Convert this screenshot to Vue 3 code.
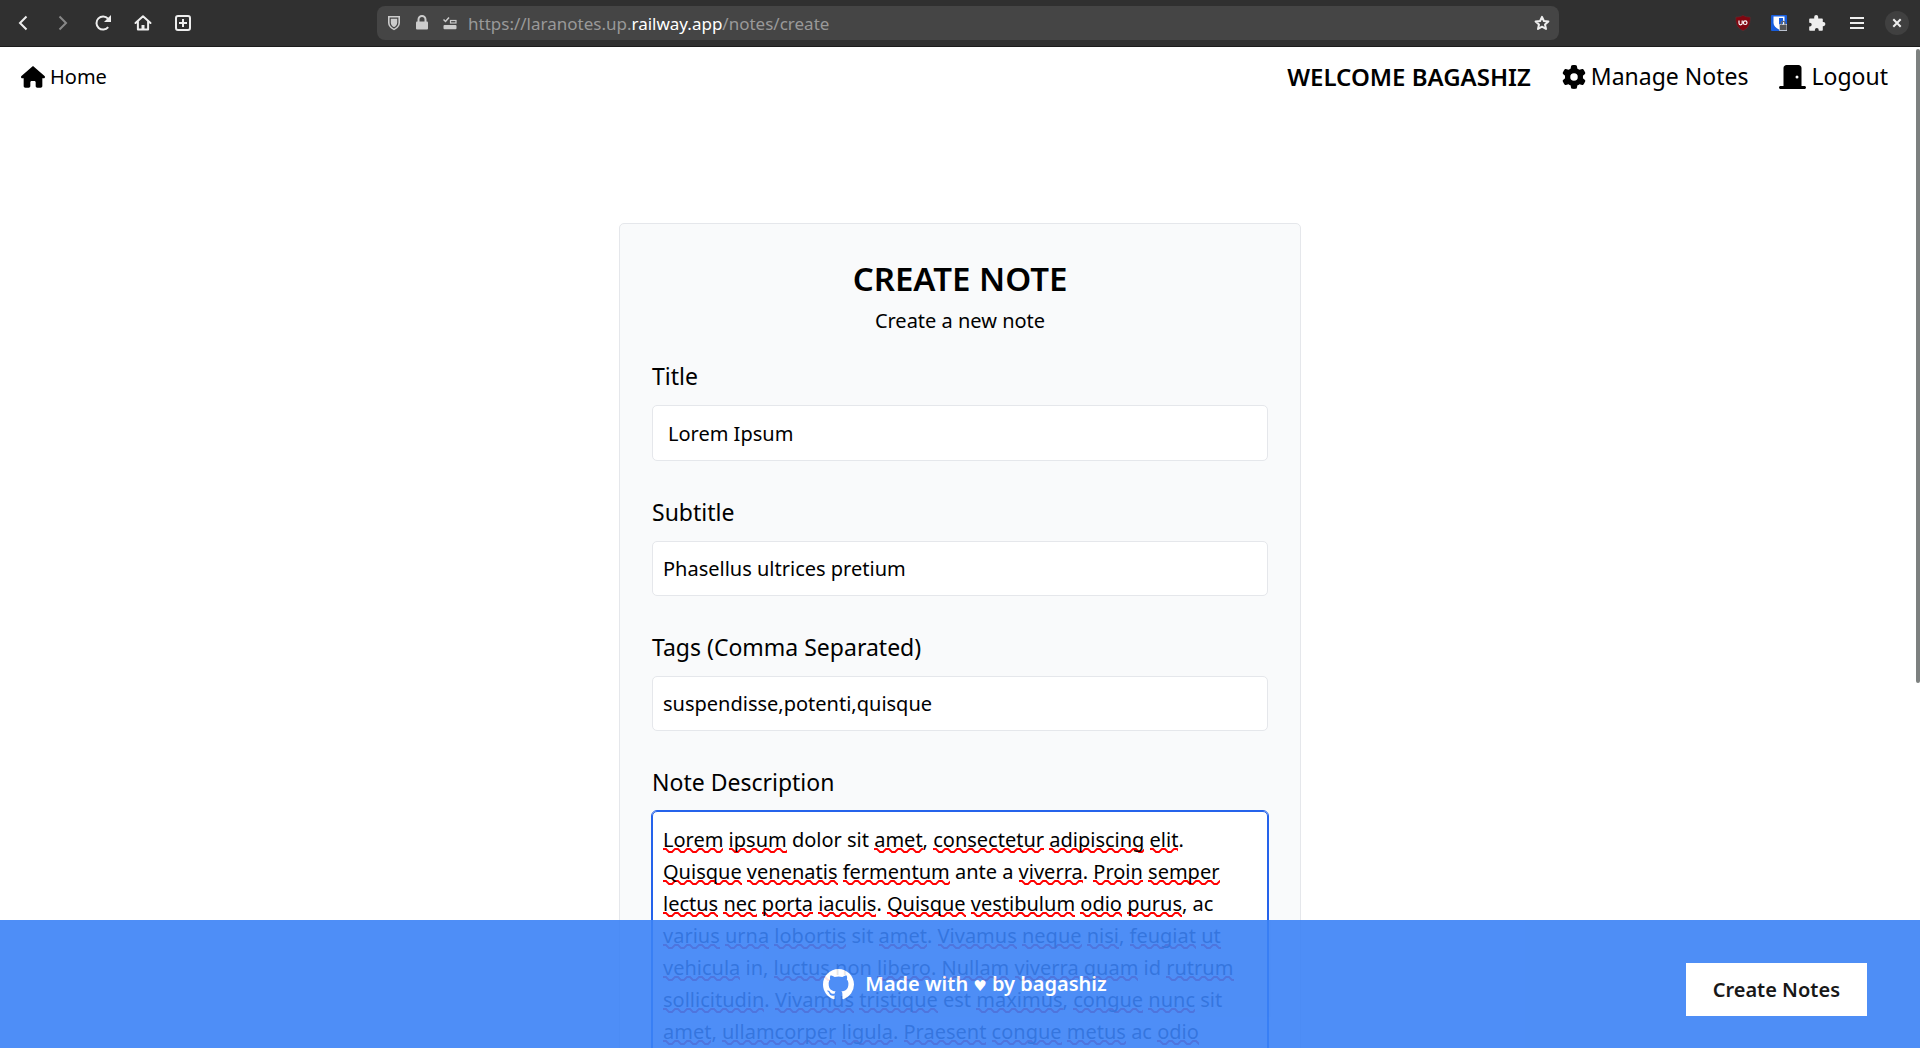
<script setup>
import { ref, computed } from 'vue'

const title = ref('Lorem Ipsum')
const subtitle = ref('Phasellus ultrices pretium')
const tags = ref('suspendisse,potenti,quisque')
const description = ref(
  [
    'Lorem ipsum dolor sit amet, consectetur adipiscing elit.',
    'Quisque venenatis fermentum ante a viverra. Proin semper',
    'lectus nec porta iaculis. Quisque vestibulum odio purus, ac',
    'varius urna lobortis sit amet. Vivamus neque nisi, feugiat ut',
    'vehicula in, luctus non libero. Nullam viverra quam id rutrum',
    'sollicitudin. Vivamus tristique est maximus, congue nunc sit',
    'amet, ullamcorper ligula. Praesent congue metus ac odio',
  ].join('\n'),
)

// words the spell checker accepts
const known = new Set(['dolor', 'sit', 'ante', 'a', 'ac', 'in', 'non', 'id', 'est'])

const tokens = computed(() =>
  (description.value.match(/[A-Za-z]+|[^A-Za-z]+/g) || []).map((text) => ({
    text,
    misspelt: /[A-Za-z]/.test(text) && !known.has(text),
  })),
)
</script>

<template>
  <div class="window">
    <header class="toolbar">
      <div class="tools tools-left">
        <button class="tool" aria-label="Back">
          <svg width="16" height="16" viewBox="0 0 16 16"><path d="M11.5 1.5 5 8l6.500 6.500" class="line" /></svg>
        </button>
        <button class="tool dim" aria-label="Forward">
          <svg width="16" height="16" viewBox="0 0 16 16"><path d="M4.5 1.500 11 8l-6.500 6.500" class="line" /></svg>
        </button>
        <button class="tool" aria-label="Reload">
          <svg width="18" height="18" viewBox="0 0 18 18"><path d="M14.2 13.2A6.6 6.6 0 1 1 14 4.6" class="line" /><path d="M17 1v7h-7z" fill="currentColor" /></svg>
        </button>
        <button class="tool" aria-label="Home page">
          <svg width="18" height="18" viewBox="0 0 18 18"><path d="M1.5 9 9 2.2 16.500 9M3.900 7.500V15.500H14.100V7.500" class="line" stroke-linejoin="round" stroke-linecap="round" /><path d="M7.500 15.500v-4.500h3v4.500z" fill="currentColor" /></svg>
        </button>
        <button class="tool" aria-label="New tab">
          <svg width="18" height="18" viewBox="0 0 18 18"><rect x="2" y="2" width="14" height="14" rx="2" class="line" /><path d="M9 5v8M5 9h8" class="line" /></svg>
        </button>
      </div>

      <div class="address">
        <div class="site-icons">
          <svg width="14" height="16" viewBox="0 0 14 16"><path d="M1 1h12v6.500c0 3.500-2.500 6-6 7.700C3.500 13.500 1 11 1 7.500z" fill="currentColor" /><path d="M3.200 3.200h7.600v4.500c0 2.300-1.500 4-3.800 5.200-2.300-1.200-3.800-2.900-3.800-5.200z" fill="none" stroke="#454545" stroke-width="1.200" /></svg>
          <svg width="14" height="16" viewBox="0 0 14 16"><path d="M3.500 7V4.500a3.500 3.500 0 0 1 7 0V7" class="line" /><rect x="1" y="6.500" width="12" height="8" rx="1" fill="currentColor" /></svg>
          <svg width="14" height="16" viewBox="0 0 14 16"><path d="M.500 4.500 2.500 6.500 6 2.500" fill="none" stroke="currentColor" stroke-width="1.500" /><rect x="7.500" y="5.500" width="5.500" height="2.500" fill="none" stroke="currentColor" stroke-width="1.200" /><rect x=".500" y="10" width="13" height="4.200" rx="1" fill="currentColor" /></svg>
        </div>
        <div class="url">https://laranotes.up.<span class="domain">railway.app</span>/notes/create</div>
        <button class="bookmark" aria-label="Bookmark this page">
          <svg width="16" height="16" viewBox="0 0 16 16"><path d="M8 1.800 9.900 6l4.500.500-3.400 3 1 4.500L8 11.700 4 14l1-4.500-3.400-3L6.100 6z" class="line" stroke-linejoin="round" /></svg>
        </button>
      </div>

      <div class="tools tools-right">
        <button class="tool narrow" aria-label="uBlock Origin">
          <svg width="16" height="16" viewBox="0 0 16 16"><path d="M8 .300c2 1.400 4.500 1.700 7.200 1.800C15.500 8.500 14 13 8 15.800 2 13 .500 8.500.800 2.100 3.500 2 6 1.700 8 .300z" fill="#800610" stroke="#5a3034" stroke-width=".600" /><path d="M4 5.500v2.800q0 1.500 1.600 1.500t1.600-1.500V5.500" fill="none" stroke="#fff" stroke-width="1.200" /><circle cx="10.200" cy="7.700" r="1.800" fill="none" stroke="#fff" stroke-width="1.200" /></svg>
        </button>
        <button class="tool narrow" aria-label="Bitwarden">
          <svg width="16" height="16" viewBox="0 0 16 16"><rect width="16" height="16" rx="1" fill="#175ddc" /><path d="M2.500 1.500h11v6.500c0 3-2.500 5-5.500 6.500-3-1.500-5.500-3.500-5.500-6.500z" fill="#fff" /><path d="M8 3h4v5c0 2-1.500 3.500-4 5z" fill="#175ddc" /><path d="M8.500 9.500h7.500v6H8.500z" fill="#555" stroke="#ddd" stroke-width=".800" /><path d="M10.300 9.500V8.300a1.900 1.900 0 0 1 3.800 0v1.200" fill="none" stroke="#666" stroke-width="1.300" /></svg>
        </button>
        <button class="tool" aria-label="Extensions">
          <svg width="18" height="18" viewBox="0 0 18 18"><path d="M2 4.500h4.200V3a2 2 0 0 1 4 0v1.500H14a.8.8 0 0 1 .8.8V8h.5a2 2 0 0 1 0 4.200h-.5V16a.8.8 0 0 1-.8.8h-3.300v-.8a1.900 1.900 0 0 0-3.800 0v.8H2a.8.8 0 0 1-.8-.8v-3.500h.6a1.900 1.900 0 0 0 0-3.800h-.6V5.300a.8.8 0 0 1 .8-.8z" fill="currentColor" /></svg>
        </button>
        <button class="tool" aria-label="Application menu">
          <svg width="14" height="14" viewBox="0 0 14 14"><path d="M0 2h14M0 7h14M0 12h14" class="line" /></svg>
        </button>
        <button class="tool" aria-label="Close window">
          <span class="close"><svg width="10" height="10" viewBox="0 0 10 10"><path d="M1.300 1.300l7.400 7.400M8.700 1.300 1.300 8.700" class="line" /></svg></span>
        </button>
      </div>
    </header>

    <div class="page">
      <nav class="nav">
        <a class="home" href="#home">
          <svg width="24" height="22" viewBox="0 0 576 512"><path fill="currentColor" d="M575.8 255.5c0 18-15 32.1-32 32.1h-32l.7 160.2c0 2.7-.2 5.4-.5 8.1V472c0 22.1-17.9 40-40 40H456c-1.1 0-2.200 0-3.300-.1c-1.400.1-2.800.1-4.200.1H416 392c-22.1 0-40-17.9-40-40V448 384c0-17.7-14.3-32-32-32H256c-17.7 0-32 14.3-32 32v64 24c0 22.1-17.9 40-40 40H160 128.1c-1.500 0-3-.1-4.500-.2c-1.200.1-2.400.2-3.600.2H104c-22.1 0-40-17.9-40-40V360c0-.9 0-1.900.1-2.800V287.600H32c-18 0-32-14-32-32.1c0-9 3-17 10-24L266.400 8c7-7 15-8 22-8s15 2 21 7L564.800 231.500c8 7 12 15 11 24z" /></svg>
          Home
        </a>
        <ul class="links">
          <li class="welcome">WELCOME BAGASHIZ</li>
          <li>
            <a href="#manage">
              <svg width="24" height="24" viewBox="0 0 512 512"><path fill="currentColor" d="M495.9 166.6c3.2 8.7 .5 18.4-6.4 24.6l-43.3 39.4c1.1 8.3 1.7 16.8 1.7 25.4s-.6 17.1-1.7 25.4l43.3 39.4c6.9 6.2 9.6 15.9 6.4 24.6c-4.4 11.9-9.7 23.3-15.8 34.3l-4.7 8.1c-6.6 11-14 21.4-22.1 31.2c-5.9 7.2-15.7 9.6-24.5 6.8l-55.7-17.7c-13.4 10.3-28.2 18.9-44 25.4l-12.5 57.1c-2 9.1-9 16.3-18.2 17.8c-13.8 2.3-28 3.5-42.5 3.5s-28.7-1.2-42.5-3.5c-9.2-1.5-16.2-8.7-18.2-17.8l-12.5-57.1c-15.8-6.5-30.6-15.1-44-25.4L83.1 425.9c-8.8 2.8-18.6 .3-24.5-6.8c-8.1-9.8-15.5-20.2-22.1-31.2l-4.7-8.1c-6.1-11-11.4-22.4-15.8-34.3c-3.2-8.7-.5-18.4 6.4-24.6l43.3-39.4C64.6 273.1 64 264.6 64 256s.6-17.1 1.7-25.4L22.4 191.2c-6.9-6.2-9.6-15.9-6.4-24.6c4.4-11.9 9.7-23.3 15.8-34.3l4.7-8.1c6.6-11 14-21.4 22.1-31.2c5.9-7.2 15.7-9.6 24.5-6.8l55.7 17.7c13.4-10.3 28.2-18.9 44-25.4l12.5-57.1c2-9.1 9-16.3 18.2-17.8C227.3 1.2 241.5 0 256 0s28.7 1.2 42.5 3.5c9.2 1.5 16.2 8.7 18.2 17.8l12.5 57.1c15.8 6.5 30.6 15.1 44 25.4l55.7-17.7c8.8-2.8 18.6-.3 24.5 6.8c8.1 9.8 15.5 20.2 22.1 31.2l4.7 8.1c6.1 11 11.4 22.4 15.8 34.3zM256 336a80 80 0 1 0 0-160 80 80 0 1 0 0 160z" /></svg>
              Manage Notes
            </a>
          </li>
          <li>
            <a href="#logout">
              <svg width="27" height="24" viewBox="0 0 576 512"><path fill="currentColor" d="M96 64c0-35.3 28.7-64 64-64H416c35.3 0 64 28.7 64 64V448h64c17.7 0 32 14.3 32 32s-14.3 32-32 32H32c-17.7 0-32-14.3-32-32s14.3-32 32-32H96V64zM384 288a32 32 0 1 0 0-64 32 32 0 1 0 0 64z" /></svg>
              Logout
            </a>
          </li>
        </ul>
      </nav>

      <main class="card">
        <div class="intro">
          <h1>CREATE NOTE</h1>
          <p>Create a new note</p>
        </div>
        <form class="form" @submit.prevent>
          <div class="field">
            <label for="title">Title</label>
            <input id="title" v-model="title" class="roomy" type="text" />
          </div>
          <div class="field">
            <label for="subtitle">Subtitle</label>
            <input id="subtitle" v-model="subtitle" type="text" />
          </div>
          <div class="field">
            <label for="tags">Tags (Comma Separated)</label>
            <input id="tags" v-model="tags" type="text" />
          </div>
          <div class="field">
            <label for="description">Note Description</label>
            <div class="editor">
              <div class="spelling" aria-hidden="true"><span v-for="(token, i) in tokens" :key="i" :class="{ misspelt: token.misspelt }">{{ token.text }}</span></div>
              <textarea id="description" v-model="description" rows="10" spellcheck="false"></textarea>
            </div>
          </div>
        </form>
      </main>

      <footer class="footer">
        <svg width="31" height="31" viewBox="0 0 16 16"><path fill="currentColor" d="M8 0C3.58 0 0 3.58 0 8c0 3.54 2.29 6.53 5.47 7.59.4.07.55-.17.55-.38 0-.19-.01-.82-.01-1.49-2.01.37-2.53-.49-2.69-.94-.09-.23-.48-.94-.82-1.13-.28-.15-.68-.52-.01-.53.63-.01 1.08.58 1.23.82.72 1.21 1.87.87 2.33.66.07-.52.28-.87.51-1.07-1.78-.2-3.64-.89-3.64-3.95 0-.87.31-1.59.82-2.15-.08-.2-.36-1.02.08-2.12 0 0 .67-.21 2.2.82.64-.18 1.32-.27 2-.27s1.36.09 2 .27c1.53-1.04 2.2-.82 2.2-.82.44 1.1.16 1.92.08 2.12.51.56.82 1.27.82 2.15 0 3.07-1.87 3.75-3.65 3.95.29.25.54.73.54 1.48 0 1.07-.01 1.93-.01 2.2 0 .21.15.46.55.38A8.01 8.01 0 0 0 16 8c0-4.42-3.58-8-8-8Z" /></svg>
        <p>Made with <span class="heart">♥</span> by bagashiz</p>
        <a class="create" href="#create">Create Notes</a>
      </footer>
      <div class="scroll-thumb"></div>
    </div>
  </div>
</template>

<style>
body {
  margin: 0;
}
</style>

<style scoped>
* {
  box-sizing: border-box;
}
.window {
  display: flex;
  flex-direction: column;
  height: 100vh;
  overflow: hidden;
  background: #fff;
  color: #000;
  font-family: "Noto Sans", "DejaVu Sans", sans-serif;
  font-size: 20px;
  line-height: 32px;
}
button {
  border: 0;
  padding: 0;
  background: none;
  color: inherit;
  font: inherit;
}
a {
  color: inherit;
  text-decoration: none;
}
svg {
  display: block;
  flex: none;
}
.line {
  fill: none;
  stroke: currentColor;
  stroke-width: 2;
}

.toolbar {
  display: flex;
  align-items: center;
  flex: none;
  height: 47px;
  padding: 0 3px;
  background: #303030;
  border-bottom: 1px solid #1c1c1c;
  color: #eee;
}
.tools {
  display: flex;
}
.tools-left {
  width: 374px;
}
.tools-right {
  width: 358px;
  justify-content: flex-end;
}
.tool {
  display: flex;
  align-items: center;
  justify-content: center;
  width: 40px;
  height: 40px;
}
.narrow {
  width: 36px;
}
.dim {
  color: #888;
}
.close {
  display: flex;
  align-items: center;
  justify-content: center;
  width: 24px;
  height: 24px;
  border-radius: 50%;
  background: #404040;
}
.address {
  display: flex;
  align-items: center;
  gap: 11px;
  flex: 1;
  height: 34px;
  padding: 0 9px 0 10px;
  border-radius: 8px;
  background: #454545;
}
.site-icons {
  display: flex;
  gap: 14px;
  color: #ccc;
}
.url {
  flex: 1;
  padding-top: 1px;
  color: #999;
  font-size: 17px;
}
.domain {
  color: #fff;
}

.page {
  position: relative;
  flex: 1;
  min-height: 0;
  overflow: hidden;
}
.nav {
  display: flex;
  align-items: center;
  justify-content: space-between;
  padding: 11px 32px 0 21px;
}
.nav a {
  display: flex;
  align-items: center;
  gap: 5px;
}
.links {
  display: flex;
  gap: 31px;
  margin: 0;
  padding: 0;
  list-style: none;
  font-size: 23px;
  line-height: 37px;
}
.welcome {
  font-size: 24px;
  font-weight: 600;
}

.card {
  width: 682px;
  max-width: 100%;
  margin: 128px auto 0;
  padding: 33px 32px;
  border: 1px solid #e5e7eb;
  border-radius: 5px;
  background: #f9fafb;
}
.intro {
  margin-bottom: 20px;
  text-align: center;
}
h1 {
  margin: 0 0 4px;
  font-size: 33px;
  font-weight: 600;
  line-height: 44px;
}
p {
  margin: 0;
}
.form {
  display: flex;
  flex-direction: column;
  gap: 32px;
}
.field {
  display: flex;
  flex-direction: column;
  gap: 9px;
}
label {
  font-size: 23px;
  line-height: 39px;
}
input,
.spelling,
textarea {
  width: 100%;
  margin: 0;
  padding: 11px 10px;
  border: 1px solid #e5e7eb;
  border-radius: 5px;
  background: #fff;
  color: inherit;
  font: inherit;
}
input {
  height: 55px;
}
.roomy {
  height: 56px;
  padding: 11px 15px;
}
.editor {
  display: grid;
}
.spelling,
textarea {
  grid-area: 1 / 1;
  padding: 12px 10px;
  line-height: 32px;
  white-space: pre;
  overflow: hidden;
}
.spelling {
  color: transparent;
}
.misspelt {
  background: url("data:image/svg+xml,%3Csvg xmlns='http://www.w3.org/2000/svg' width='12' height='5'%3E%3Cpath d='M-3 4L0 1H3L6 4H9L12 1H15' fill='none' stroke='%23f00' stroke-width='1.800'/%3E%3C/svg%3E") repeat-x left bottom;
}
textarea {
  display: block;
  position: relative;
  resize: none;
  border-color: #2563eb;
  outline: 1px solid #2563eb;
  background: transparent;
}

.footer {
  position: absolute;
  inset: auto 0 0;
  display: flex;
  align-items: center;
  justify-content: center;
  gap: 11px;
  height: 128px;
  padding: 1px 0 0 10px;
  background: #3b82f6;
  color: #fff;
  font-weight: 600;
  opacity: 0.9;
}
.heart {
  font-family: "DejaVu Sans", sans-serif;
  font-size: 15px;
  font-weight: 400;
}
.create {
  position: absolute;
  top: 43px;
  right: 53px;
  padding: 11px 27px 10px;
  background: #fff;
  color: #000;
}
.scroll-thumb {
  position: absolute;
  top: 2px;
  right: 0;
  width: 4px;
  height: 634px;
  border-radius: 2px;
  background: #7d8180;
}
</style>
